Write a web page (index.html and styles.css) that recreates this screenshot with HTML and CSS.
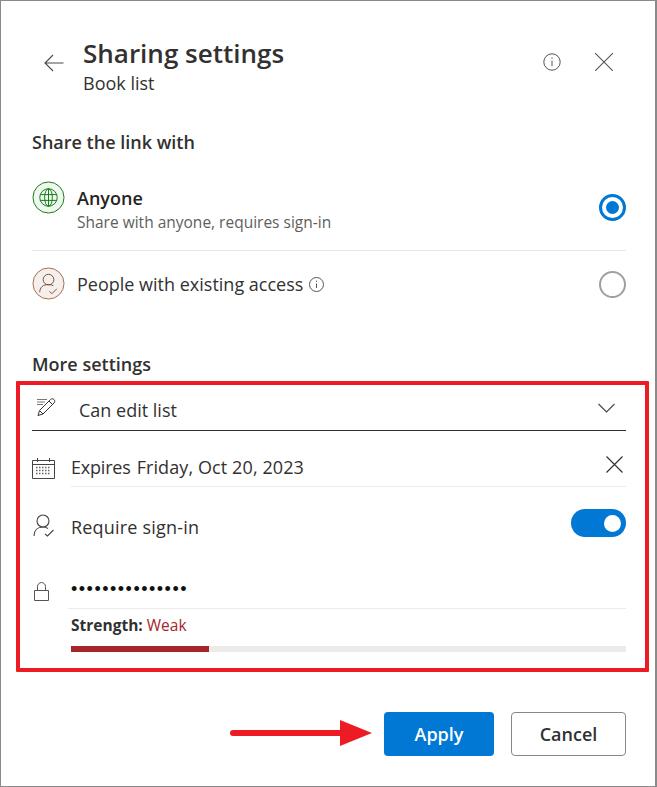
FILE: index.html
```html
<!DOCTYPE html>
<html lang="en">
<head>
<meta charset="utf-8">
<title>Sharing settings</title>
<link rel="stylesheet" href="styles.css">
</head>
<body>
<main class="dialog">
  <header class="header">
    <svg class="back" width="20" height="20" viewBox="0 0 20 20"><path d="M19.500 10H1M9 2l-8 8 8 8" fill="none" stroke="#4a4a4a" stroke-width="1.1"/></svg>
    <div class="titles">
      <h1 class="title">Sharing settings</h1>
      <div class="subtitle">Book list</div>
    </div>
    <svg class="info-top" width="18" height="18" viewBox="0 0 18 18"><circle cx="9" cy="9" r="8.2" fill="none" stroke="#555" stroke-width="1"/><path d="M9 7.6v5.6M9 4.6v1.3" stroke="#555" stroke-width="1" fill="none"/></svg>
    <svg class="close-top" width="18" height="18" viewBox="0 0 18 18"><path d="M0 0l18 18M18 0L0 18" stroke="#555" stroke-width="1.1" fill="none"/></svg>
  </header>

  <h2 class="section share-heading">Share the link with</h2>

  <div class="option option-first">
    <svg class="avatar" width="33" height="33" viewBox="0 0 34 34"><circle cx="17" cy="17" r="16" fill="#f0f6f0" stroke="#107c10" stroke-width="1"/><g fill="none" stroke="#107c10" stroke-width="1"><circle cx="17" cy="17" r="9"/><ellipse cx="17" cy="17" rx="4" ry="9"/><path d="M8.5 14h17M8.5 20h17M17 8v18"/></g></svg>
    <div class="option-text">
      <div class="option-title">Anyone</div>
      <div class="option-sub">Share with anyone, requires sign-in</div>
    </div>
    <span class="radio radio-on"></span>
  </div>

  <div class="option option-second">
    <svg class="avatar" width="33" height="33" viewBox="0 0 34 34"><circle cx="17" cy="17" r="16" fill="#f5f0ec" stroke="#a5694f" stroke-width="1"/><g fill="none" stroke="#7a4a35" stroke-width="1"><circle cx="17" cy="13" r="5.5"/><path d="M8 26c0-5 3.500-8 9-8 2 0 3.500.4 5 1.200M18 25l2.500 2.500 5-5"/></g></svg>
    <div class="option-inline">People with existing access
      <svg class="info-small" width="15" height="15" viewBox="0 0 15 15"><circle cx="7.500" cy="7.500" r="7" fill="none" stroke="#555" stroke-width="1"/><path d="M7.500 6.500v4.500M7.500 3.700v1.200" stroke="#555" stroke-width="1" fill="none"/></svg>
    </div>
    <span class="radio"></span>
  </div>

  <h2 class="section more-heading">More settings</h2>

  <div class="permission">
    <svg class="pencil" width="21" height="20" viewBox="0 0 21 20"><path d="M1 18.500l1.500-5L13.500 2.500c1-1 2.500-1 3.500 0s1 2.500 0 3.500L6 17zM2.500 13.500L6 17M12 4l3.500 3.500" fill="none" stroke="#333" stroke-width="1"/><path d="M0 2.500h10M0 5h8M0 7.500h6" stroke="#777" stroke-width="1"/></svg>
    <span class="permission-label">Can edit list</span>
    <svg class="chevron" width="17" height="10" viewBox="0 0 17 10"><path d="M.5 1l8 8 8-8" fill="none" stroke="#444" stroke-width="1.100"/></svg>
  </div>

  <div class="setting setting-expiry">
    <svg class="cal" width="23" height="21" viewBox="0 0 23 21"><path d="M.5 2.500h22v18H.5zM.5 6.500h22M5.500 0v4M17.500 0v4" fill="none" stroke="#444" stroke-width="1"/><path d="M4 9.500h15M4 12.500h15M4 15.500h15" stroke="#666" stroke-width="1.400" stroke-dasharray="1.500 1.500"/></svg>
    <div class="field field-expiry">
      <span class="expires">Expires</span><span class="date">Friday, Oct 20, 2023</span>
      <svg class="clear" width="17" height="17" viewBox="0 0 17 17"><path d="M.5.500l16 16M16.500.500l-16 16" stroke="#333" stroke-width="1.200" fill="none"/></svg>
    </div>
  </div>

  <div class="setting setting-signin">
    <svg class="person" width="21" height="23" viewBox="0 0 21 23"><g fill="none" stroke="#444" stroke-width="1.100"><circle cx="10" cy="7" r="6"/><path d="M1 22c0-5.500 3.500-9 9-9 2 0 3.500.5 5 1.500M12 20l2.500 2 6-6"/></g></svg>
    <div class="field-plain">Require sign-in</div>
    <span class="toggle"><span class="knob"></span></span>
  </div>

  <div class="setting setting-password">
    <svg class="lock" width="15" height="19" viewBox="0 0 15 19"><path d="M.5 8.500h14v10H.5zM3.500 8.500V4.500c0-2.200 1.800-4 4-4s4 1.800 4 4v4" fill="none" stroke="#555" stroke-width="1"/></svg>
    <div class="password">•••••••••••••••</div>
  </div>

  <div class="strength"><strong>Strength:</strong> <span class="weak">Weak</span></div>
  <div class="meter"><div class="meter-fill" style="width:24.9%"></div></div>

  <footer class="actions">
    <button class="btn btn-primary">Apply</button>
    <button class="btn btn-secondary">Cancel</button>
  </footer>
</main>

<div class="highlight"></div>
<svg class="arrow" width="144" height="28" viewBox="0 0 144 28"><path d="M3 14h110" stroke="#ed1c24" stroke-width="6" stroke-linecap="round"/><path d="M110 1l32 13-32 13z" fill="#ed1c24"/></svg>
</body>
</html>
```
FILE: styles.css
```css
* { box-sizing: border-box; }
html, body { margin: 0; padding: 0; background: #fff; }
body {
  width: 657px;
  height: 787px;
  overflow: hidden;
  position: relative;
  font-family: "Open Sans", "Noto Sans", sans-serif;
  color: #323130;
}
.dialog {
  width: 657px;
  height: 787px;
  border: 1px solid #8a8a8a;
  border-right-width: 2px;
  padding: 0 29px 0 31px;
  background: #fff;
}
.header { display: flex; height: 101px; position: relative; }
.back { margin: 52px 20px 0 12px; flex: none; }
.titles { flex: 1; padding-top: 34px; margin-left: -1px; }
.title { margin: 0; font-size: 26px; line-height: 36px; font-weight: 600; }
.subtitle { font-size: 18px; line-height: 24px; }
.info-top { margin: 52px 0 0 0; flex: none; }
.close-top { margin: 52px 13px 0 34px; flex: none; }
.section { margin: 0; font-size: 18px; font-weight: 600; line-height: 24px; }
.share-heading { margin-top: 28px; }
.option { display: flex; align-items: flex-start; }
.option-first { height: 97px; padding-top: 27px; border-bottom: 1px solid #e6e6e6; }
.option-second { height: 66px; padding-top: 16px; }
.avatar { flex: none; margin-right: 12px; }
.option-text { flex: 1; }
.option-title { font-size: 18px; font-weight: 600; line-height: 24px; margin-top: 5px; color: #252423; }
.option-sub { font-size: 15.5px; line-height: 22px; color: #605e5c; margin-top: 1px; }
.option-inline { flex: 1; font-size: 18px; line-height: 34px; display: flex; align-items: center; gap: 6px; }
.radio { width: 27px; height: 27px; border-radius: 50%; border: 2px solid #a19f9d; flex: none; margin-top: 4px; background: #fff; }
.option-first .radio { margin-top: 13px; }
.radio-on { border: 3px solid #0078d4; display: flex; align-items: center; justify-content: center; }
.radio-on::after { content: ""; width: 13px; height: 13px; border-radius: 50%; background: #0078d4; }
.more-heading { margin-top: 35px; }
.permission { display: flex; align-items: center; height: 55px; border-bottom: 1px solid #323130; padding-top: 5px; }
.pencil { margin: 2px 21px 0 5px; flex: none; }
.permission-label { flex: 1; font-size: 18px; position: relative; top: 4px; }
.chevron { margin: 0 11px 0 0; flex: none; position: relative; top: 2px; }
.setting { display: flex; }
.setting-expiry { height: 56px; align-items: flex-start; }
.cal { flex: none; margin: 27px 16px 0 0; }
.field { flex: 1; display: flex; align-items: center; height: 56px; border-bottom: 1px solid #edebe9; font-size: 18px; padding-top: 17px; }
.expires { letter-spacing: -0.2px; }
.date { flex: 1; margin-left: 6px; letter-spacing: 0.1px; }
.clear { margin-right: 3px; position: relative; top: -3px; }
.setting-signin { height: 80px; align-items: center; }
.person { flex: none; margin: -4px 18px 0 1px; }
.field-plain { flex: 1; font-size: 18px; margin-left: -1px; letter-spacing: 0.2px; }
.toggle { width: 55px; height: 28px; border-radius: 14px; background: #0078d4; display: flex; align-items: center; justify-content: flex-end; padding-right: 5px; position: relative; top: -4px; }
.knob { width: 17px; height: 17px; border-radius: 50%; background: #fff; }
.setting-password { height: 42px; align-items: flex-start; }
.lock { flex: none; margin: 15px 19px 0 2px; }
.password { flex: 1; padding: 2px 0 0 3px; height: 42px; border-bottom: 1px solid #edebe9; font-size: 18px; line-height: 40px; color: #111; letter-spacing: 1.5px; font-family: "Liberation Sans", sans-serif; }
.strength { font-size: 15.5px; line-height: 20px; margin: 6px 0 0 39px; }
.strength strong { font-weight: 700; }
.weak { color: #a4262c; }
.meter { height: 6px; background: #edebe9; margin: 11px 0 0 39px; }
.meter-fill { height: 100%; background: #a4262c; }
.actions { display: flex; justify-content: flex-end; gap: 17px; margin-top: 60px; }
.btn { height: 44px; border-radius: 4px; font-family: inherit; font-size: 18px; font-weight: 600; padding: 0; }
.btn-primary { width: 110px; background: #0078d4; color: #fff; border: none; }
.btn-secondary { width: 115px; background: #fff; color: #323130; border: 1px solid #8a8886; }
.highlight { position: absolute; left: 16px; top: 381px; width: 633px; height: 291px; border: 4px solid #ed1c24; border-radius: 1px; pointer-events: none; }
.arrow { position: absolute; left: 230px; top: 719px; }
```
